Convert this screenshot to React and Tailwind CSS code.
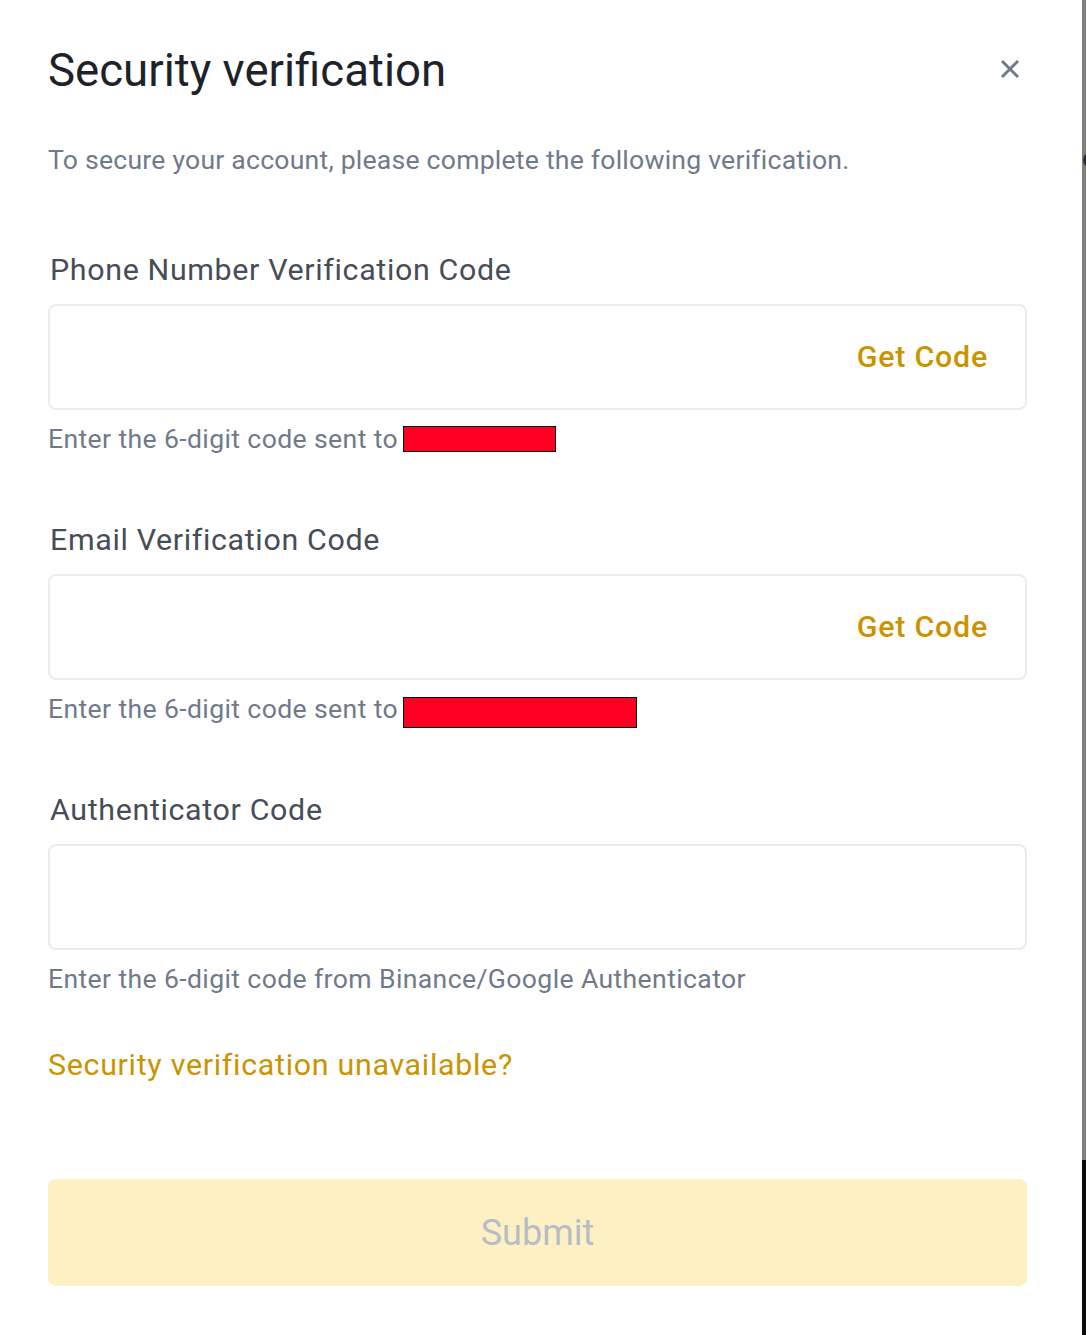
import React from "react";

function Helper({ text, boxW, boxH, boxMt }) {
  return (
    <div className="flex items-center h-[34px] mt-[12px] text-[26.6px] leading-[34px] tracking-[0.37px] text-[#707a8a]">
      <span>{text}</span>
      {boxW ? (
        <span
          className="inline-block ml-[5px] bg-[#ff0022] border border-black"
          style={{ width: boxW, height: boxH, marginTop: boxMt || 0 }}
        />
      ) : null}
    </div>
  );
}

function Field({ label, getCode, helper, boxW, boxH, boxMt, first }) {
  return (
    <div className={first ? "mt-[72px]" : "mt-[64px]"}>
      <div className="pl-[2px] text-[30.4px] leading-[40px] tracking-[0.65px] text-[#474d57]">{label}</div>
      <div className="mt-[14px] h-[106px] w-full rounded-[8px] border-2 border-[#eaecef] flex items-center justify-end pr-[37px]">
        {getCode ? (
          <span className="text-[30.4px] font-medium tracking-[0.75px] text-[#c99400]">Get Code</span>
        ) : null}
      </div>
      <Helper text={helper} boxW={boxW} boxH={boxH} boxMt={boxMt} />
    </div>
  );
}

export default function App() {
  return (
    <div
      className="flex w-[1086px] h-[1335px] bg-white overflow-hidden"
      style={{ fontFamily: "Roboto, 'Noto Sans', sans-serif" }}
    >
      <div className="w-[1082px] shrink-0 bg-white pl-[48px] pt-[43px]">
        <div className="w-[979px]">
          <div className="flex items-center justify-between h-[56px]">
            <h1 className="text-[45.6px] leading-[56px] text-[#1e2329] font-normal">
              Security verification
            </h1>
            <button className="mr-[6px] mb-[4px] w-[22px] h-[22px] flex items-center justify-center">
              <svg width="20" height="20" viewBox="0 0 20 20">
                <path d="M2 2 L18 18 M18 2 L2 18" stroke="#707a8a" strokeWidth="3" strokeLinecap="butt" />
              </svg>
            </button>
          </div>
          <p className="mt-[43px] text-[26.6px] leading-[36px] tracking-[0.22px] text-[#707a8a]">
            To secure your account, please complete the following verification.
          </p>

          <Field
            first
            label="Phone Number Verification Code"
            getCode
            helper="Enter the 6-digit code sent to"
            boxW={153}
            boxH={26}
          />
          <Field
            label="Email Verification Code"
            getCode
            helper="Enter the 6-digit code sent to"
            boxW={234}
            boxH={31}
            boxMt={6}
          />
          <Field
            label="Authenticator Code"
            helper="Enter the 6-digit code from Binance/Google Authenticator"
          />

          <div className="mt-[49px] text-[30.4px] leading-[40px] tracking-[0.7px] text-[#c99400]">
            Security verification unavailable?
          </div>

          <button className="mt-[94px] w-full h-[107px] rounded-[8px] bg-[#fdf0c3] flex items-center justify-center">
            <span className="text-[36px] text-[#b7bdc6]">Submit</span>
          </button>
        </div>
      </div>
      <div className="w-[4px] shrink-0 flex flex-col">
        <div className="relative h-[1160px] bg-[#7f7f7f] overflow-hidden">
          <span className="absolute left-[0px] top-[140px] text-[26px] leading-[36px] text-[#1e2a3a]">e</span>
        </div>
        <div className="flex-1 bg-[#0b0b0b]" />
      </div>
    </div>
  );
}
